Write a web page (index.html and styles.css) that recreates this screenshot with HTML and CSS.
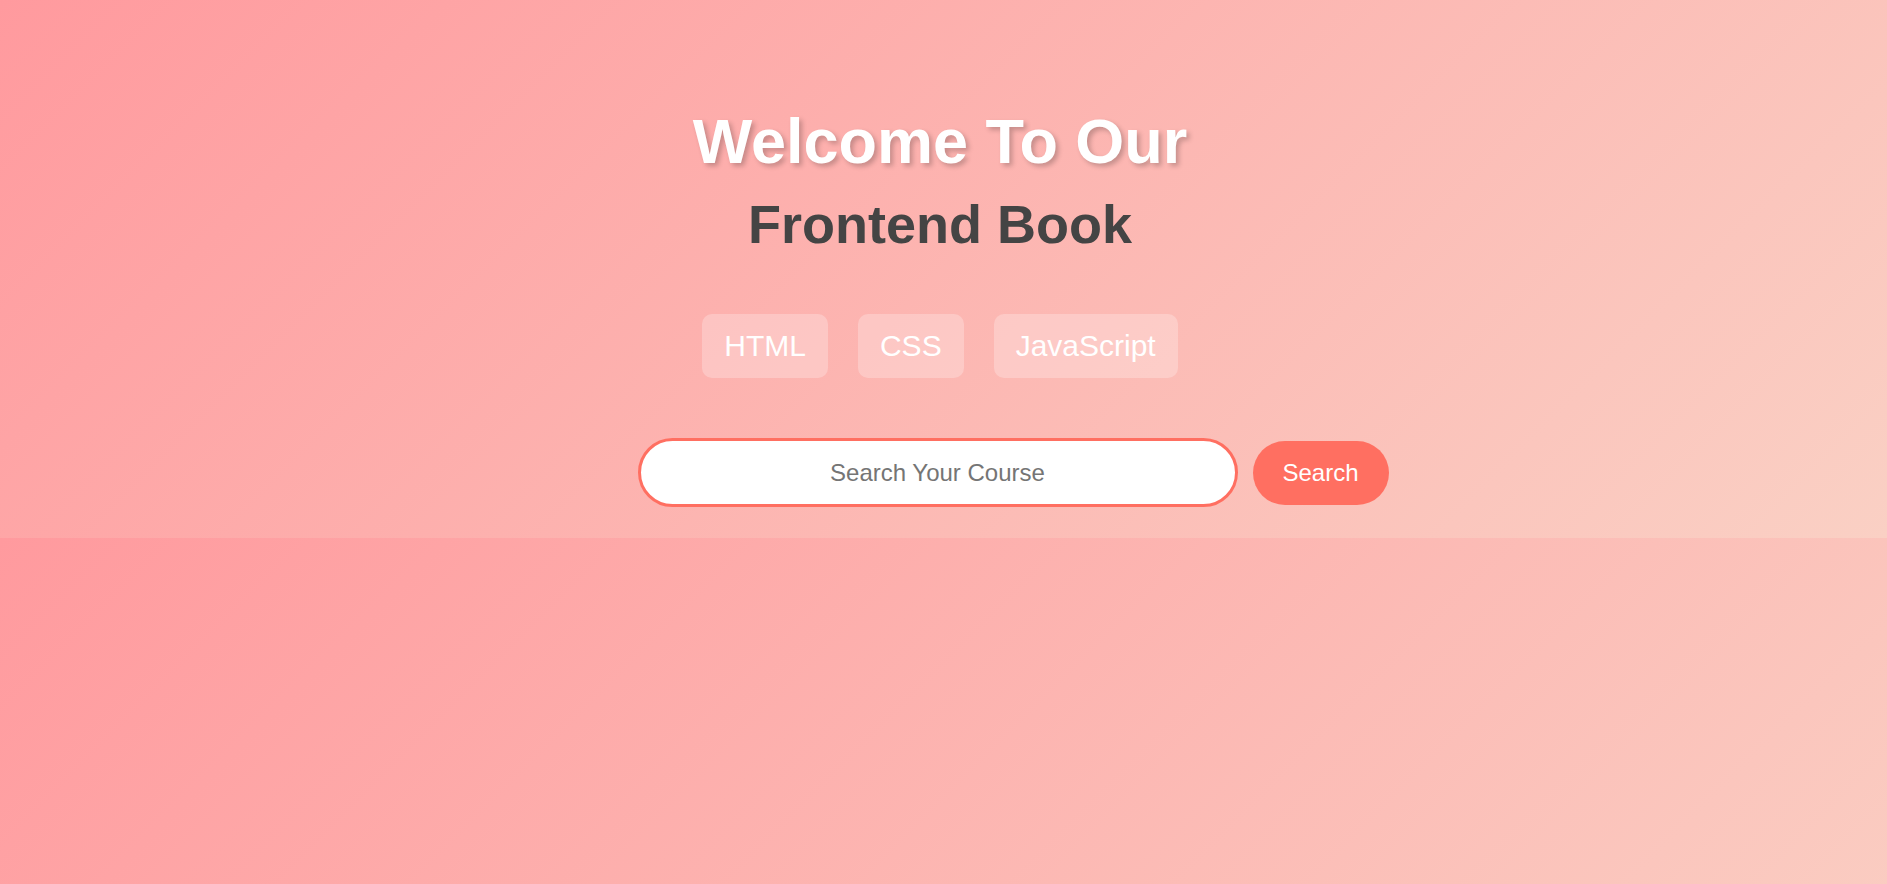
FILE: index.html
```html
<!DOCTYPE html>
<html lang="en">
<head>
<meta charset="utf-8">
<title>Frontend Book</title>
<link rel="stylesheet" href="styles.css">
</head>
<body>
<header class="hero">
  <h1 class="hero-title">Welcome To Our</h1>
  <h2 class="hero-subtitle">Frontend Book</h2>
  <ul class="tags">
    <li class="tag">HTML</li>
    <li class="tag">CSS</li>
    <li class="tag">JavaScript</li>
  </ul>
  <form class="search" onsubmit="return false;">
    <input class="search-input" type="text" placeholder="Search Your Course">
    <button class="search-button" type="submit">Search</button>
  </form>
</header>
</body>
</html>
```
FILE: styles.css
```css
* {
  box-sizing: border-box;
}

body {
  margin: 0;
  font-family: "Liberation Sans", Arial, sans-serif;
  background: linear-gradient(135deg, #ff9a9e 0%, #fad0c4 100%);
}

.hero {
  height: 538px;
  padding: 105px 7px 0 0;
  text-align: center;
}

.hero-title {
  margin: 0;
  font-size: 63px;
  font-weight: bold;
  color: #ffffff;
  text-shadow: 3px 3px 5px rgba(0, 0, 0, 0.22);
}

.hero-subtitle {
  margin: 16px 0 0;
  font-size: 54px;
  font-weight: bold;
  color: #444444;
}

.tags {
  list-style: none;
  margin: 59px 0 0;
  padding: 0;
  display: flex;
  justify-content: center;
  gap: 30px;
}

.tag {
  font-size: 30px;
  color: #ffffff;
  padding: 15px 22px;
  background: rgba(255, 255, 255, 0.25);
  border-radius: 10px;
}

.search {
  margin: 60px 5px 0 0;
  display: grid;
  grid-template-columns: 1fr 600px 1fr;
  align-items: center;
}

.search-input {
  grid-column: 2;
  width: 600px;
  height: 69px;
  padding: 0 30px;
  border: 3px solid #ff6f61;
  border-radius: 35px;
  background: #ffffff;
  font-family: "Liberation Sans", Arial, sans-serif;
  font-size: 24px;
  color: #333333;
  text-align: center;
  outline: none;
}

.search-input::placeholder {
  color: #757575;
}

.search-button {
  grid-column: 3;
  justify-self: start;
  margin-left: 15px;
  height: 64px;
  padding: 0 30px;
  border: none;
  border-radius: 32px;
  background: #ff6f61;
  color: #ffffff;
  font-family: "Liberation Sans", Arial, sans-serif;
  font-size: 24px;
  cursor: pointer;
}
```
